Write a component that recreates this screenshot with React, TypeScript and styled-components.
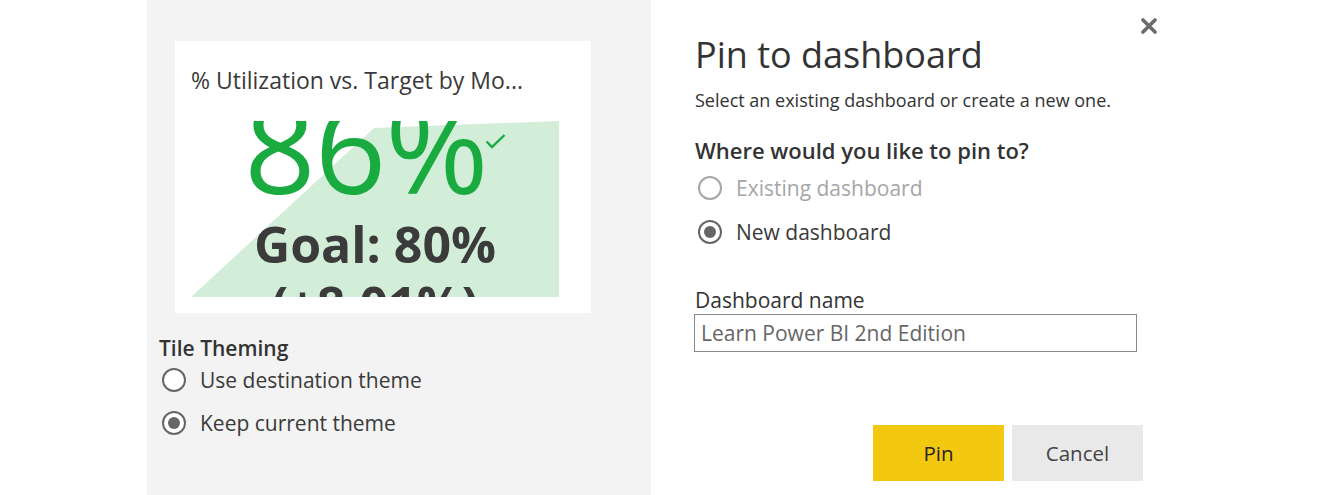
import React from "react";
import styled, { createGlobalStyle } from "styled-components";

const GlobalStyle = createGlobalStyle`
  html, body {
    margin: 0;
    padding: 0;
    background: #ffffff;
  }
  body {
    font-family: "Open Sans", "Noto Sans", "Liberation Sans", sans-serif;
    color: #333333;
  }
`;

const Dialog = styled.div`
  position: relative;
  display: flex;
  width: 1322px;
  height: 495px;
  overflow: hidden;
`;

const PreviewPane = styled.div`
  margin-left: 147px;
  width: 504px;
  height: 495px;
  box-sizing: border-box;
  padding: 41px 0 0 12px;
  background: #f3f3f3;
`;

const Tile = styled.div`
  margin-left: 16px;
  width: 416px;
  height: 272px;
  box-sizing: border-box;
  padding: 24px 16px 0;
  background: #ffffff;
`;

const TileTitle = styled.div`
  font-size: 23px;
  line-height: 30px;
  color: #3a3a3a;
  white-space: nowrap;
`;

const Visual = styled.div`
  position: relative;
  margin-top: 26px;
  width: 368px;
  height: 176px;
  overflow: hidden;
  display: flex;
  flex-direction: column;
  align-items: center;
`;

const Backdrop = styled.svg`
  position: absolute;
  inset: 0;
`;

const BigValue = styled.div`
  position: relative;
  display: flex;
  align-items: flex-start;
  margin-top: -40px;
  font-size: 125px;
  line-height: 130px;
  color: #1aab40;
  letter-spacing: -1px;
`;

const Check = styled.svg`
  margin: 52px 0 0 -3px;
`;

const Goal = styled.div`
  position: relative;
  margin-top: 3px;
  font-size: 50px;
  font-weight: 700;
  line-height: 60px;
  color: #3b3b3b;
  text-align: center;
`;

const SectionTitle = styled.div`
  font-size: 21px;
  font-weight: 600;
  line-height: 24px;
  color: #333333;
`;

const ThemeHeading = styled(SectionTitle)`
  margin-top: 23px;
`;

const RadioList = styled.div<{ $gap: number; $top?: number }>`
  display: flex;
  flex-direction: column;
  gap: ${(p) => p.$gap}px;
  margin-top: ${(p) => p.$top ?? 0}px;
`;

const RadioRow = styled.label<{ $disabled?: boolean }>`
  display: flex;
  align-items: center;
  gap: 14px;
  height: 40px;
  padding-left: 3px;
  font-size: 21px;
  color: ${(p) => (p.$disabled ? "#a6a6a6" : "#3a3a3a")};
`;

const RadioCircle = styled.span<{ $checked?: boolean; $disabled?: boolean }>`
  display: flex;
  align-items: center;
  justify-content: center;
  width: 24px;
  height: 24px;
  box-sizing: border-box;
  border-radius: 50%;
  border: 2.5px solid ${(p) => (p.$disabled ? "#a6a6a6" : "#666666")};
  background: #ffffff;

  &::after {
    content: "";
    display: ${(p) => (p.$checked ? "block" : "none")};
    width: 12px;
    height: 12px;
    border-radius: 50%;
    background: #666666;
  }
`;

const FormPane = styled.div`
  margin-left: 44px;
  width: 448px;
  padding-top: 31px;
  display: flex;
  flex-direction: column;
`;

const Heading = styled.h1`
  margin: 0;
  font-size: 36px;
  font-weight: 400;
  line-height: 48px;
  color: #333333;
`;

const Subtitle = styled.p`
  margin: 10px 0 0;
  font-size: 18px;
  line-height: 22px;
  color: #333333;
`;

const Question = styled(SectionTitle)`
  margin-top: 27px;
  font-size: 22px;
`;

const FieldLabel = styled.div`
  margin-top: 36px;
  font-size: 21px;
  line-height: 24px;
  color: #333333;
`;

const TextInput = styled.input`
  margin: 2px 0 0 -1px;
  width: 443px;
  height: 38px;
  box-sizing: border-box;
  padding: 0 6px;
  border: 1px solid #8a8a8a;
  border-radius: 0;
  font-family: inherit;
  font-size: 21px;
  color: #666666;
  outline: none;
`;

const Actions = styled.div`
  margin-top: 73px;
  display: flex;
  justify-content: flex-end;
  gap: 8px;
`;

const Button = styled.button<{ $primary?: boolean }>`
  width: 131px;
  height: 56px;
  border: none;
  border-radius: 0;
  font-family: inherit;
  font-size: 20.5px;
  background: ${(p) => (p.$primary ? "#f2c811" : "#e9e9e9")};
  color: ${(p) => (p.$primary ? "#252423" : "#444444")};
  cursor: pointer;
`;

const CloseButton = styled.button`
  position: absolute;
  left: 1137px;
  top: 14px;
  width: 24px;
  height: 24px;
  padding: 0;
  border: none;
  background: transparent;
  display: flex;
  align-items: center;
  justify-content: center;
  cursor: pointer;
`;

export default function App() {
  return (
    <>
      <GlobalStyle />
      <Dialog>
        <PreviewPane>
          <Tile>
            <TileTitle>% Utilization vs. Target by Mo...</TileTitle>
            <Visual>
              <Backdrop width="368" height="176" viewBox="0 0 368 176">
                <polygon points="0,176 183,7 368,0 368,176" fill="#d2eed8" />
              </Backdrop>
              <BigValue>
                86%
                <Check width="21" height="16" viewBox="0 0 21 16">
                  <path d="M1.5 8.5 L7 14 L19.5 2" fill="none" stroke="#1aab40" strokeWidth="2.4" />
                </Check>
              </BigValue>
              <Goal>
                Goal: 80%
                <br />
                (+8.01%)
              </Goal>
            </Visual>
          </Tile>
          <ThemeHeading>Tile Theming</ThemeHeading>
          <RadioList $gap={3}>
            <RadioRow>
              <RadioCircle />
              Use destination theme
            </RadioRow>
            <RadioRow>
              <RadioCircle $checked />
              Keep current theme
            </RadioRow>
          </RadioList>
        </PreviewPane>

        <FormPane>
          <Heading>Pin to dashboard</Heading>
          <Subtitle>Select an existing dashboard or create a new one.</Subtitle>
          <Question>Where would you like to pin to?</Question>
          <RadioList $gap={4} $top={6}>
            <RadioRow $disabled>
              <RadioCircle $disabled />
              Existing dashboard
            </RadioRow>
            <RadioRow>
              <RadioCircle $checked />
              New dashboard
            </RadioRow>
          </RadioList>
          <FieldLabel>Dashboard name</FieldLabel>
          <TextInput defaultValue="Learn Power BI 2nd Edition" />
          <Actions>
            <Button $primary>Pin</Button>
            <Button>Cancel</Button>
          </Actions>
        </FormPane>

        <CloseButton aria-label="Close">
          <svg width="16" height="16" viewBox="0 0 16 16">
            <path d="M2 2 L14 14 M14 2 L2 14" stroke="#6b6b6b" strokeWidth="3.6" strokeLinecap="round" />
          </svg>
        </CloseButton>
      </Dialog>
    </>
  );
}
